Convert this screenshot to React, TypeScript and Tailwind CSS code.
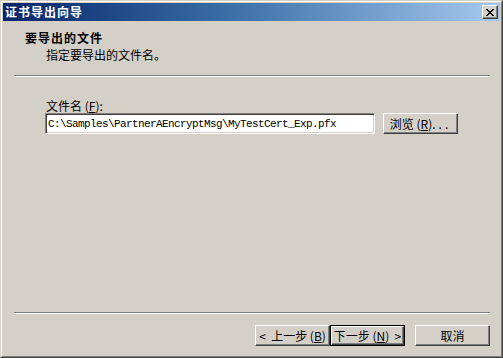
import React from 'react';

const cjk = "font-['Noto_Sans_CJK_SC','Liberation_Sans',sans-serif]";

function Button({ children, isDefault = false, className = '' }: { children: React.ReactNode; isDefault?: boolean; className?: string }) {
    const inner = (
        <div className="h-full w-full bg-[#d4d0c8] border border-t-white border-l-white border-r-[#404040] border-b-[#404040] shadow-[inset_-1px_-1px_0_#808080] flex items-center justify-center text-[12px] leading-[14px] text-black whitespace-pre">
            {children}
        </div>
    );
    return (
        <div className={`w-[75px] h-[21px] ${isDefault ? 'border border-black' : ''} ${className}`}>
            {inner}
        </div>
    );
}

function Separator({ className = '' }: { className?: string }) {
    return <div className={`h-[2px] border-t border-t-[#808080] border-b border-b-white ${className}`} />;
}

export default function App() {
    return (
        <div className={`w-[503px] h-[358px] bg-[#d4d0c8] border border-t-[#d4d0c8] border-l-[#d4d0c8] border-r-[#404040] border-b-[#404040] ${cjk}`}>
            <div className="h-full border border-t-white border-l-white border-r-[#808080] border-b-[#808080] p-px flex flex-col">
                {/* Title bar */}
                <div className="h-[18px] shrink-0 bg-linear-to-r from-[#0a246a] via-[#3a6ea5] via-45% to-[#a6caf0] flex items-center justify-between pl-[2px] pr-[2px]">
                    <span className="text-white font-bold text-[12px] leading-[14px] tracking-[1px]">证书导出向导</span>
                    <div className="w-[16px] h-[14px] bg-[#d4d0c8] border border-t-white border-l-white border-r-[#404040] border-b-[#404040] shadow-[inset_-1px_-1px_0_#808080] flex items-center justify-center">
                        <svg width="8" height="7" viewBox="0 0 8 7" shapeRendering="crispEdges">
                            <path d="M0 0h2v1h-2zM6 0h2v1h-2zM1 1h2v1h-2zM5 1h2v1h-2zM2 2h4v1h-4zM3 3h2v1h-2zM2 4h4v1h-4zM1 5h2v1h-2zM5 5h2v1h-2zM0 6h2v1h-2zM6 6h2v1h-2z" fill="#000" />
                        </svg>
                    </div>
                </div>

                {/* Header */}
                <div className="h-[54px] shrink-0 pl-[22px] pt-[10px]">
                    <div className="text-[12px] leading-[14px] font-bold text-black tracking-[1px]">要导出的文件</div>
                    <div className="text-[12px] leading-[14px] text-black mt-[3px] ml-[21px]">指定要导出的文件名。</div>
                </div>
                <Separator className="ml-[11px] mr-[10px]" />

                {/* Body */}
                <div className="flex-1 pl-[42px] pt-[22px]">
                    <div className="text-[12px] leading-[14px] text-black ml-px whitespace-pre">
                        文件名 (<span className="underline">F</span>):
                    </div>
                    <div className="flex items-center gap-[8px]">
                        <div className="w-[330px] h-[21px] bg-white border border-t-[#808080] border-l-[#808080] border-r-white border-b-white shadow-[inset_1px_1px_0_#404040,inset_-1px_-1px_0_#d4d0c8] flex items-center pl-[2px]">
                            <span className="font-['Liberation_Mono',monospace] text-[11px] tracking-[-0.6px] leading-[14px] text-black">C:\Samples\PartnerAEncryptMsg\MyTestCert_Exp.pfx</span>
                        </div>
                        <Button>
                            浏览 (<span className="underline">R</span>)<span className="tracking-[3px]">...</span>
                        </Button>
                    </div>
                </div>

                <Separator className="ml-[11px] mr-[10px]" />

                {/* Footer buttons */}
                <div className="h-[41px] shrink-0 flex justify-end pt-[11px] pr-[10px]">
                    <Button>
                        &lt;  上一步 (<span className="underline">B</span>)
                    </Button>
                    <Button isDefault>
                        下一步 (<span className="underline">N</span>)  &gt;
                    </Button>
                    <Button className="ml-[10px]">取消</Button>
                </div>
            </div>
        </div>
    );
}
